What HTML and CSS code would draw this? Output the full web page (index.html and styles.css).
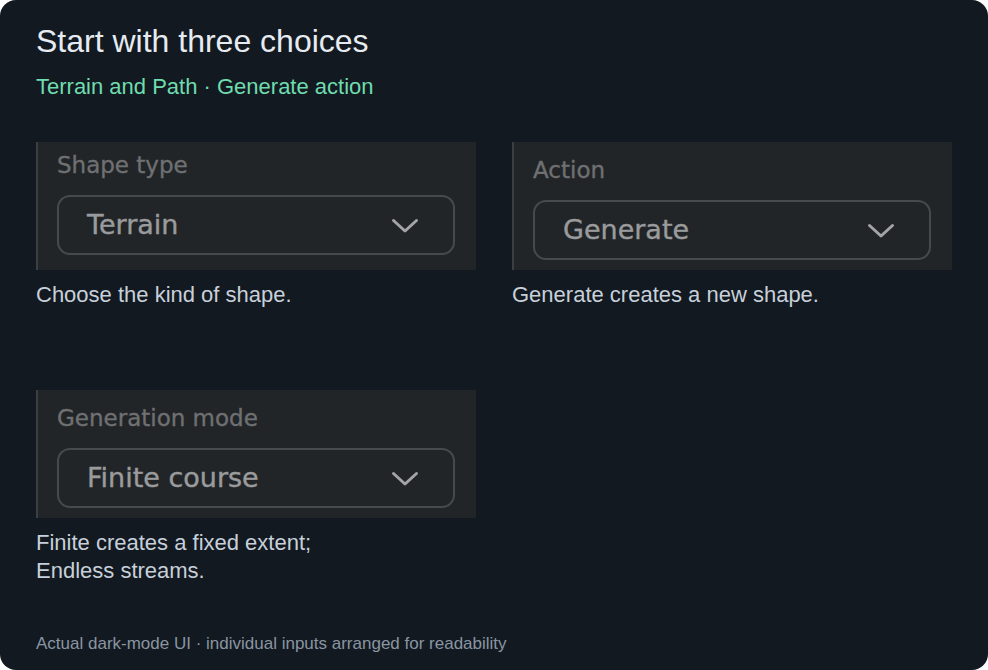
FILE: index.html
```html
<!DOCTYPE html>
<html lang="en">
<head>
<meta charset="utf-8">
<title>Start with three choices</title>
<link rel="stylesheet" href="styles.css">
</head>
<body>
<main class="card">
  <h1 class="title">Start with three choices</h1>
  <p class="subtitle">Terrain and Path · Generate action</p>

  <div class="fields">
    <div class="field">
      <div class="panel panel-tight">
        <div class="label">Shape type</div>
        <div class="select">
          <span class="value">Terrain</span>
          <svg class="chev" width="28" height="16" viewBox="0 0 28 16"><path d="M2.5 2.5 L14 13 L25.5 2.5" fill="none" stroke="#a3a4a5" stroke-width="3" stroke-linecap="round" stroke-linejoin="round"/></svg>
        </div>
      </div>
      <p class="help">Choose the kind of shape.</p>
    </div>

    <div class="field">
      <div class="panel">
        <div class="label">Action</div>
        <div class="select">
          <span class="value">Generate</span>
          <svg class="chev" width="28" height="16" viewBox="0 0 28 16"><path d="M2.5 2.5 L14 13 L25.5 2.5" fill="none" stroke="#a3a4a5" stroke-width="3" stroke-linecap="round" stroke-linejoin="round"/></svg>
        </div>
      </div>
      <p class="help">Generate creates a new shape.</p>
    </div>

    <div class="field">
      <div class="panel">
        <div class="label">Generation mode</div>
        <div class="select">
          <span class="value">Finite course</span>
          <svg class="chev" width="28" height="16" viewBox="0 0 28 16"><path d="M2.5 2.5 L14 13 L25.5 2.5" fill="none" stroke="#a3a4a5" stroke-width="3" stroke-linecap="round" stroke-linejoin="round"/></svg>
        </div>
      </div>
      <p class="help">Finite creates a fixed extent;<br>Endless streams.</p>
    </div>
  </div>

  <p class="footer">Actual dark-mode UI · individual inputs arranged for readability</p>
</main>
</body>
</html>
```

FILE: styles.css
```css
* { box-sizing: border-box; }

html, body {
  margin: 0;
  padding: 0;
  background: #ffffff;
}

.card {
  width: 988px;
  height: 670px;
  background: #121920;
  border-radius: 16px;
  padding: 22px 36px 16px 36px;
  display: flex;
  flex-direction: column;
  font-family: "Liberation Sans", Arial, sans-serif;
}

.title {
  margin: 0;
  font-size: 32px;
  line-height: 38px;
  font-weight: 400;
  color: #e6ebf1;
}

.subtitle {
  margin: 13px 0 0 0;
  font-size: 22px;
  line-height: 28px;
  color: #6fdcaf;
}

.fields {
  margin-top: 41px;
  display: grid;
  grid-template-columns: 440px 440px;
  column-gap: 36px;
  row-gap: 81px;
  align-items: start;
}

.panel {
  height: 128px;
  background: #222528;
  border-left: 2px solid #3b3e42;
  padding: 14px 21px 10px 19px;
  display: flex;
  flex-direction: column;
}

.panel-tight {
  padding-top: 9px;
  padding-bottom: 15px;
}

.label {
  font-family: "DejaVu Sans", "Noto Sans", sans-serif;
  font-size: 23px;
  line-height: 28px;
  color: #6f7072;
  -webkit-text-stroke: 0.35px #6f7072;
}

.select {
  margin-top: 16px;
  height: 60px;
  border: 2px solid #46494d;
  border-radius: 13px;
  display: flex;
  align-items: center;
  justify-content: space-between;
  padding: 0 34px 0 28px;
}

.value {
  font-family: "DejaVu Sans", "Noto Sans", sans-serif;
  font-size: 27px;
  line-height: 56px;
  color: #9a9b9c;
  -webkit-text-stroke: 0.4px #9a9b9c;
}

.chev {
  display: block;
  margin-top: 1px;
}

.help {
  margin: 11px 0 0 0;
  font-size: 22px;
  line-height: 28px;
  color: #c7d0da;
}

.footer {
  margin: auto 0 0 0;
  font-size: 17px;
  line-height: 20px;
  color: #8a95a2;
}
```
